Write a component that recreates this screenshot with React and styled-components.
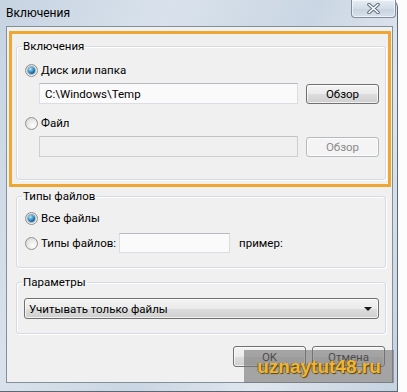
import React from 'react';
import styled, { createGlobalStyle } from 'styled-components';

const GlobalStyle = createGlobalStyle`
  body {
    margin: 0;
    background: #fcfcfc;
    font-family: Roboto, "Noto Sans", sans-serif;
    font-size: 11.5px;
    color: #000;
  }
`;

const Window = styled.div`
  position: relative;
  box-sizing: border-box;
  width: 398px;
  height: 392px;
  display: flex;
  flex-direction: column;
  background: linear-gradient(115deg, #c6d3e1 0%, #d9e2ec 30%, #cad6e3 55%, #dfe6ee 75%, #c5d2e0 100%);
  border-right: 1px solid #5d6874;
  border-bottom: 1px solid #5d6874;
  border-top-right-radius: 7px;
`;

const TitleBar = styled.div`
  height: 26px;
  display: flex;
  justify-content: space-between;
  align-items: flex-start;
  padding-left: 6px;
`;

const TitleText = styled.span`
  margin-top: 6px;
  line-height: 14px;
  font-size: 12px;
`;

const CloseButton = styled.div`
  box-sizing: border-box;
  width: 45px;
  height: 18px;
  margin-right: 1px;
  display: flex;
  align-items: center;
  justify-content: center;
  border: 1px solid #7f8d9d;
  border-top: none;
  border-radius: 0 0 4px 4px;
  background: linear-gradient(#e6edf4, #d3dde8 50%, #c6d2df 51%, #d8e1ea);
  box-shadow: inset 0 0 0 1px rgba(255, 255, 255, 0.6);
`;

const Client = styled.div`
  flex: 1;
  display: flex;
  flex-direction: column;
  margin: 0 4px 8px 6px;
  border: 1px solid #848f9b;
  background: #f0f0f0;
`;

const Highlight = styled.div`
  margin: 4px 1px 0 2px;
  padding: 5px 2px 4px 4px;
  border: 3px solid #f0a731;
`;

const Group = styled.fieldset`
  margin: ${p => p.$margin || '0'};
  padding: 0;
  min-width: 0;
  border: 1px solid #d5dbe0;
  border-radius: 3px;
  box-shadow: inset 1px 1px 0 #fff, 1px 1px 0 #fff;
`;

const Legend = styled.legend`
  margin-left: 5px;
  padding: 0 1px;
  line-height: 14px;
`;

const GroupBody = styled.div`
  display: flex;
  flex-direction: column;
  padding: ${p => p.$pad};
`;

const Row = styled.div`
  display: flex;
  align-items: center;
  height: ${p => p.$h || 16}px;
  margin-top: ${p => p.$mt || 0}px;
  padding-left: ${p => p.$indent || 0}px;
  gap: ${p => p.$gap || 0}px;
`;

const Radio = styled.span`
  box-sizing: border-box;
  width: 13px;
  height: 13px;
  flex: none;
  display: inline-flex;
  align-items: center;
  justify-content: center;
  border-radius: 50%;
  border: 1px solid #8f9091;
  background: radial-gradient(circle at 65% 70%, #ffffff 0%, #eeeeee 40%, #d3d3d3 100%);
`;

const RadioDot = styled.span`
  width: 7px;
  height: 7px;
  border-radius: 50%;
  background: radial-gradient(circle at 35% 30%, #b8ecff 0%, #48a2d6 35%, #1b5f8e 70%, #0c3a5a 100%);
  box-shadow: 0 0 0 1px rgba(40, 90, 130, 0.4);
`;

const Label = styled.span`
  margin-left: ${p => p.$ml || 3}px;
  line-height: 14px;
  white-space: nowrap;
`;

const TextBox = styled.div`
  box-sizing: border-box;
  width: ${p => p.$w}px;
  height: ${p => p.$h || 21}px;
  flex: none;
  display: flex;
  align-items: center;
  padding-left: 5px;
  margin-left: ${p => p.$ml || 0}px;
  border: 1px solid ${p => (p.$disabled ? '#cfcfcf' : '#dadde2')};
  border-top-color: ${p => (p.$disabled ? '#c2c2c2' : '#b5b8bd')};
  background: ${p => (p.$disabled ? '#f0f0f0' : '#fafafa')};
`;

const Button = styled.div`
  box-sizing: border-box;
  width: ${p => p.$w}px;
  height: ${p => p.$h || 21}px;
  flex: none;
  display: flex;
  align-items: center;
  justify-content: center;
  border: 1px solid ${p => (p.$disabled ? '#b6babd' : '#707070')};
  border-radius: 3px;
  color: ${p => (p.$disabled ? '#8a8a8a' : '#000')};
  background: ${p =>
    p.$disabled
      ? '#f4f4f4'
      : 'linear-gradient(#f3f3f3 0%, #ebebeb 50%, #dddddd 51%, #cfcfcf 100%)'};
  box-shadow: inset 0 0 0 1px rgba(255, 255, 255, 0.7);
`;

const Select = styled.div`
  box-sizing: border-box;
  height: 21px;
  display: flex;
  align-items: center;
  justify-content: space-between;
  padding: 0 6px 0 4px;
  border: 1px solid #707070;
  border-radius: 3px;
  background: linear-gradient(#f3f3f3 0%, #ebebeb 50%, #dddddd 51%, #cfcfcf 100%);
  box-shadow: inset 0 0 0 1px rgba(255, 255, 255, 0.7);
`;

const Arrow = styled.span`
  width: 0;
  height: 0;
  border-left: 4px solid transparent;
  border-right: 4px solid transparent;
  border-top: 4px solid #1a1a1a;
`;

const Footer = styled.div`
  display: flex;
  justify-content: flex-end;
  gap: 6px;
  margin-top: 12px;
  padding-right: 7px;
`;

const Watermark = styled.div`
  position: absolute;
  left: 244px;
  top: 350px;
  width: 150px;
  height: 33px;
  display: flex;
  align-items: center;
  justify-content: center;
  background: rgba(118, 118, 118, 0.62);
  font-family: "Liberation Sans", Arial, sans-serif;
  font-weight: bold;
  font-size: 19px;
  color: #f0b535;
  text-shadow: 1px 1px 1px #5a4410, -1px 0 0 rgba(90, 68, 16, 0.5);
`;

function CloseGlyph() {
  return (
    <svg width="13" height="11" viewBox="0 0 13 11">
      <path d="M2 1.5 L11 9.5 M11 1.5 L2 9.5" stroke="#5f6d7d" strokeWidth="3.6" strokeLinecap="round" />
      <path d="M2 1.5 L11 9.5 M11 1.5 L2 9.5" stroke="#ffffff" strokeWidth="1.6" strokeLinecap="round" />
    </svg>
  );
}

function RadioItem({ checked, label }) {
  return (
    <>
      <Radio>{checked && <RadioDot />}</Radio>
      <Label>{label}</Label>
    </>
  );
}

export default function App() {
  return (
    <>
      <GlobalStyle />
      <Window>
        <TitleBar>
          <TitleText>Включения</TitleText>
          <CloseButton>
            <CloseGlyph />
          </CloseButton>
        </TitleBar>
        <Client>
          <Highlight>
            <Group>
              <Legend>Включения</Legend>
              <GroupBody $pad="9px 5px 22px 8px">
                <Row>
                  <RadioItem checked label="Диск или папка" />
                </Row>
                <Row $h={21} $mt={5} $indent={14} $gap={8}>
                  <TextBox $w={259}>C:\Windows\Temp</TextBox>
                  <Button $w={73} $h={20}>Обзор</Button>
                </Row>
                <Row $mt={11}>
                  <RadioItem label="Файл" />
                </Row>
                <Row $h={21} $mt={5} $indent={14} $gap={8}>
                  <TextBox $w={259} $disabled />
                  <Button $w={73} $h={20} $disabled>Обзор</Button>
                </Row>
              </GroupBody>
            </Group>
          </Highlight>

          <Group $margin="2px 6px 0 9px">
            <Legend>Типы файлов</Legend>
            <GroupBody $pad="7px 5px 14px 8px">
              <Row>
                <RadioItem checked label="Все файлы" />
              </Row>
              <Row $h={20} $mt={7}>
                <RadioItem label="Типы файлов:" />
                <TextBox $w={111} $h={20} $ml={3} />
                <Label $ml={9}>пример:</Label>
              </Row>
            </GroupBody>
          </Group>

          <Group $margin="7px 6px 0 9px">
            <Legend>Параметры</Legend>
            <GroupBody $pad="9px 6px 14px 7px">
              <Select>
                <span>Учитывать только файлы</span>
                <Arrow />
              </Select>
            </GroupBody>
          </Group>

          <Footer>
            <Button $w={73}>OK</Button>
            <Button $w={73}>Отмена</Button>
          </Footer>
        </Client>
        <Watermark>uznaytut48.ru</Watermark>
      </Window>
    </>
  );
}
